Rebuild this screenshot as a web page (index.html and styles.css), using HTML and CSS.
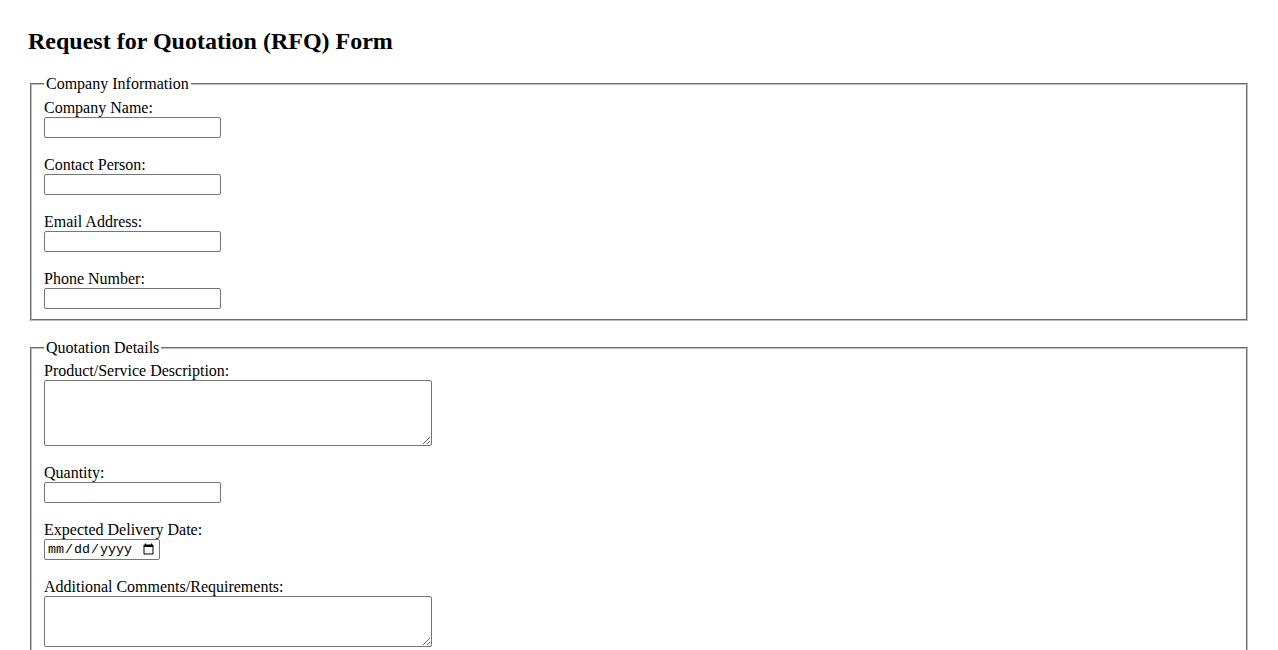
FILE: index.html
```html
<!DOCTYPE html>
<html lang="en">
<head>
<meta charset="utf-8">
<title>Request for Quotation (RFQ) Form</title>
<link rel="stylesheet" href="styles.css">
</head>
<body>
<h1 class="title">Request for Quotation (RFQ) Form</h1>
<form class="rfq-form">
  <fieldset class="group">
    <legend class="group-legend">Company Information</legend>
    <div class="field">
      <label class="field-label" for="company">Company Name:</label>
      <input class="text-input" type="text" id="company" name="company">
    </div>
    <div class="field">
      <label class="field-label" for="contact">Contact Person:</label>
      <input class="text-input" type="text" id="contact" name="contact">
    </div>
    <div class="field">
      <label class="field-label" for="email">Email Address:</label>
      <input class="text-input" type="email" id="email" name="email">
    </div>
    <div class="field">
      <label class="field-label" for="phone">Phone Number:</label>
      <input class="text-input" type="tel" id="phone" name="phone">
    </div>
  </fieldset>
  <fieldset class="group">
    <legend class="group-legend">Quotation Details</legend>
    <div class="field">
      <label class="field-label" for="description">Product/Service Description:</label>
      <textarea class="text-area text-area-lg" id="description" name="description"></textarea>
    </div>
    <div class="field">
      <label class="field-label" for="quantity">Quantity:</label>
      <input class="text-input" type="number" id="quantity" name="quantity">
    </div>
    <div class="field">
      <label class="field-label" for="delivery">Expected Delivery Date:</label>
      <input class="date-input" type="date" id="delivery" name="delivery">
    </div>
    <div class="field">
      <label class="field-label" for="comments">Additional Comments/Requirements:</label>
      <textarea class="text-area text-area-sm" id="comments" name="comments"></textarea>
    </div>
  </fieldset>
</form>
</body>
</html>
```
FILE: styles.css
```css
html, body {
  background: #ffffff;
}

body {
  margin: 28px;
  font-family: "Liberation Serif", "Times New Roman", serif;
  font-size: 16px;
  color: #000000;
}

.title {
  font-size: 24px;
  font-weight: bold;
  line-height: 26px;
  margin: 0 0 21px 0;
}

.rfq-form {
  margin: 0;
}

.group {
  margin: 0 2px 18px 2px;
  padding: 5.6px 12px 10px 12px;
  border: 2px groove rgb(192, 192, 192);
  min-width: 0;
}

.group-legend {
  padding: 0 2px;
  line-height: 18px;
}

.field {
  margin-bottom: 18px;
}

.field:last-child {
  margin-bottom: 0;
}

.field-label {
  display: block;
  line-height: 18px;
}

.text-input,
.date-input,
.text-area {
  display: block;
  box-sizing: border-box;
  margin: 0;
  border: 1px solid #767676;
  border-radius: 2px;
  background: #ffffff;
  font-family: "Liberation Sans", Arial, sans-serif;
  font-size: 13.333px;
}

.text-input {
  width: 177px;
  height: 21px;
  padding: 1px 2px;
}

.date-input {
  width: 116px;
  height: 21px;
  padding: 1px 2px;
  font-family: "Liberation Mono", "DejaVu Sans Mono", monospace;
  font-size: 13.333px;
  color: #000000;
}

.text-area {
  width: 388px;
  padding: 2px;
  font-family: "Liberation Mono", monospace;
}

.text-area-lg {
  height: 66px;
}

.text-area-sm {
  height: 51px;
}
```
